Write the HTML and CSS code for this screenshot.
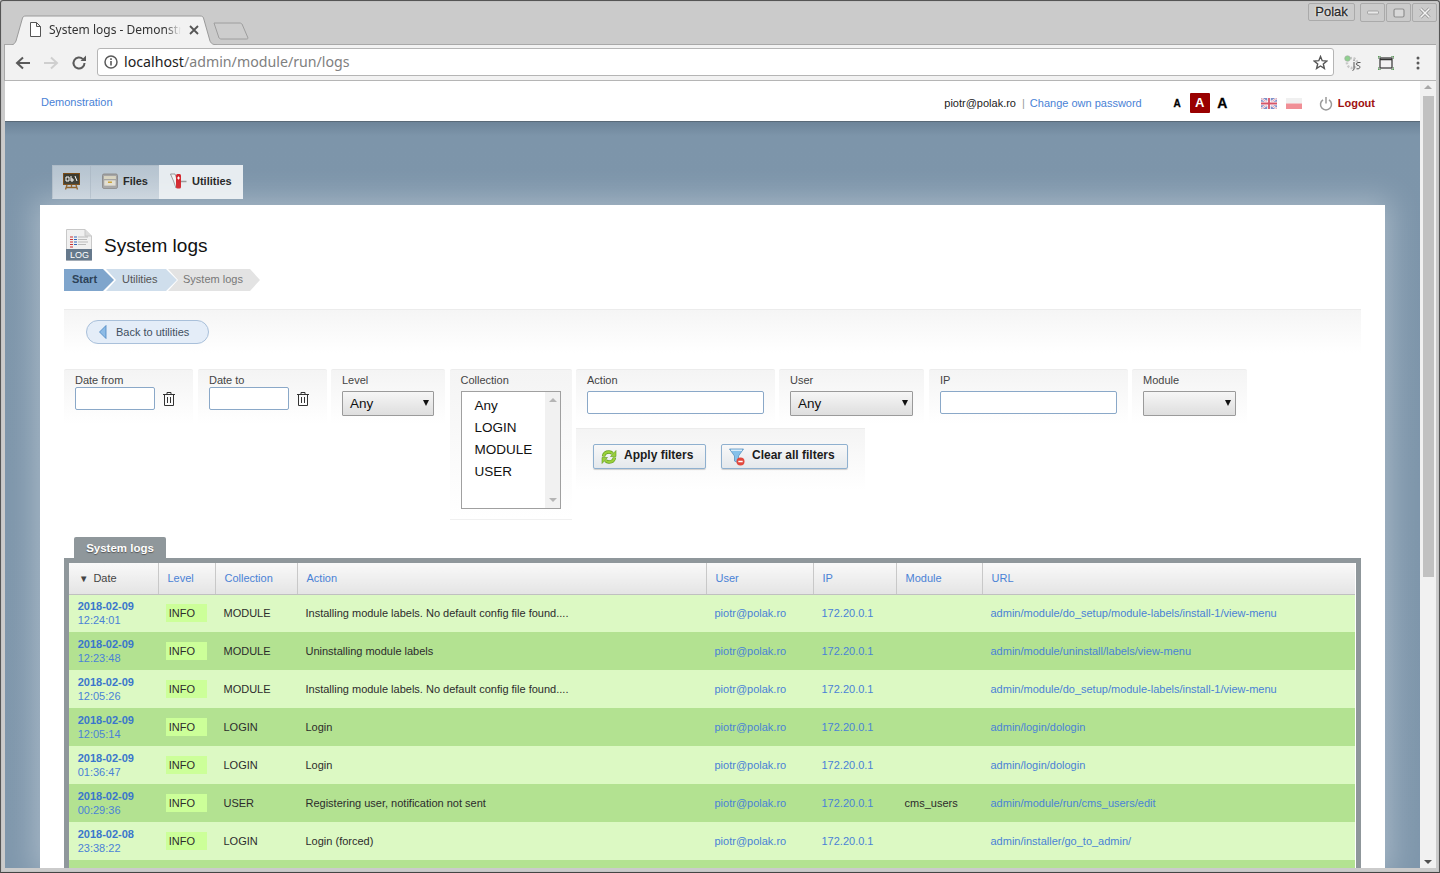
FILE: index.html
```html
<!DOCTYPE html>
<html lang="en">
<head>
<meta charset="utf-8">
<title>System logs - Demonstration</title>
<link rel="stylesheet" href="styles.css">
</head>
<body>
<div class="window">
  <div class="titlebar">
    <div class="tab">
      <svg class="tab-shape" width="206" height="30" viewBox="0 0 206 30"><path d="M0.500 30C3 29.500 4 28 5 26L11.500 3C12 1.500 13 1 15 1H189C191 1 192 1.500 192.500 3L199 26C200 28 201 29.500 205.500 30" fill="#f2f2f2" stroke="#9a9a9a"/></svg>
      <svg class="tab-file" width="11" height="15" viewBox="0 0 11 15"><path d="M.5 .5H6.500L10.500 4.500V14.500H.5zM6.500 .5V4.500H10.500" fill="#fff" stroke="#555"/></svg>
      <span class="tab-title">System logs - Demonstration</span>
      <svg class="tab-x" width="10" height="10" viewBox="0 0 10 10"><path d="M1 1L9 9M9 1L1 9" stroke="#555" stroke-width="1.800"/></svg>
    </div>
    <svg class="newtab" width="36" height="18" viewBox="0 0 36 18"><path d="M1 1H27C28 1 29 2 29 2L35 16C35 17 34 17 33 17H8C7 17 6 16 6 16z" fill="#cdcdcd" stroke="#9e9e9e"/></svg>
    <div class="title-spacer"></div>
    <div class="wm-user">Polak</div>
    <div class="wm-btn"><svg width="12" height="6" viewBox="0 0 12 6"><rect x=".5" y="1" width="11" height="3" rx="1" fill="#e8e8e8" stroke="#999" stroke-width=".8"/></svg></div>
    <div class="wm-btn"><svg width="12" height="10" viewBox="0 0 12 10"><rect x="1" y="1" width="10" height="8" rx="1.500" fill="#d8d8d8" stroke="#8f8f8f" stroke-width="1.200"/></svg></div>
    <div class="wm-btn"><svg width="12" height="12" viewBox="0 0 12 12"><path d="M1.500 1.500L10.500 10.500M10.500 1.500L1.500 10.500" stroke="#8c8c8c" stroke-width="3"/><path d="M1.500 1.500L10.500 10.500M10.500 1.500L1.500 10.500" stroke="#f4f4f4" stroke-width="1.600"/></svg></div>
  </div>
  <div class="toolbar">
    <svg class="tool" width="16" height="14" viewBox="0 0 16 14"><path d="M15 7H2.500M8 1.500L2 7L8 12.500" fill="none" stroke="#5a5a5a" stroke-width="2"/></svg>
    <svg class="tool" width="16" height="14" viewBox="0 0 16 14"><path d="M1 7H13.500M8 1.500L14 7L8 12.500" fill="none" stroke="#cfcfcf" stroke-width="2"/></svg>
    <svg class="tool" width="16" height="16" viewBox="0 0 16 16"><path d="M13.500 8A5.500 5.500 0 1 1 11.900 4.100" fill="none" stroke="#5a5a5a" stroke-width="2"/><path d="M9.500 6H15V.5z" fill="#5a5a5a"/></svg>
    <div class="omnibox">
      <svg class="omni-i" width="14" height="14" viewBox="0 0 14 14"><circle cx="7" cy="7" r="6" fill="none" stroke="#5a5a5a" stroke-width="1.500"/><path d="M7 6V10.500M7 3.300V4.900" stroke="#5a5a5a" stroke-width="1.600"/></svg>
      <span class="url"><span class="url-host">localhost</span>/admin/module/run/logs</span>
      <svg class="omni-star" width="15" height="15" viewBox="0 0 15 15"><path d="M7.500 1.500L9.200 5.700L13.800 6L10.300 8.900L11.400 13.400L7.500 11L3.600 13.400L4.700 8.900L1.200 6L5.800 5.700z" fill="none" stroke="#555" stroke-width="1.400"/></svg>
    </div>
    <svg class="ext-js" width="18" height="16" viewBox="0 0 18 16"><circle cx="8" cy="8" r="5" fill="none" stroke="#c8c8c8" stroke-width="2.500" stroke-dasharray="2 1.500"/><circle cx="3.500" cy="3.500" r="2.800" fill="#8fd08f" stroke="#aaa" stroke-width=".6"/><path d="M10 7V14.500L8.500 15.500M10 4.800V5.800M16.500 7.500H14C12 7.500 12 10.500 14 10.500C16.500 10.500 16.500 13.800 14 13.800H12.500" fill="none" stroke="#555" stroke-width="1"/></svg>
    <svg class="ext-frame" width="16" height="14" viewBox="0 0 16 14"><rect x="2" y="2" width="12" height="10" fill="none" stroke="#333" stroke-width="1.200"/><path d="M2 3.500H14" stroke="#333" stroke-width="1.500"/><path d="M0 3V0H3M13 0H16V3M16 11V14H13M3 14H0V11" fill="none" stroke="#2a7a2a"/></svg>
    <svg class="ext-menu" width="4" height="14" viewBox="0 0 4 14"><circle cx="2" cy="2" r="1.500" fill="#5a5a5a"/><circle cx="2" cy="7" r="1.500" fill="#5a5a5a"/><circle cx="2" cy="12" r="1.500" fill="#5a5a5a"/></svg>
  </div>
  <div class="viewport">
    <div class="page">
      <header class="topbar">
        <a class="site-link">Demonstration</a>
        <div class="top-spacer"></div>
        <span class="user-mail">piotr@polak.ro</span>
        <span class="top-sep">|</span>
        <a class="pass-link">Change own password</a>
        <div class="font-switch">
          <span class="font-a font-small">A</span>
          <span class="font-a font-current">A</span>
          <span class="font-a font-large">A</span>
        </div>
        <div class="flags">
          <svg width="16" height="11" viewBox="0 0 16 11"><rect width="16" height="11" fill="#7f90c8"/><path d="M0 0L16 11M16 0L0 11" stroke="#fff" stroke-width="2"/><path d="M0 0L16 11M16 0L0 11" stroke="#d9788c" stroke-width=".7"/><path d="M8 0V11M0 5.500H16" stroke="#fff" stroke-width="3.500"/><path d="M8 0V11M0 5.500H16" stroke="#d5566a" stroke-width="1.800"/></svg>
          <svg width="16" height="11" viewBox="0 0 16 11"><rect width="16" height="5.500" fill="#f0f0f0"/><rect y="5.500" width="16" height="5.500" fill="#f08f96"/></svg>
        </div>
        <svg class="power" width="14" height="15" viewBox="0 0 14 15"><path d="M4 3.800A5.500 5.500 0 1 0 10 3.800" fill="none" stroke="#999" stroke-width="1.500"/><path d="M7 1V7.500" stroke="#999" stroke-width="1.500"/></svg>
        <a class="logout">Logout</a>
      </header>
      <div class="stage">
        <nav class="mainnav">
          <div class="navitem">
            <svg width="17" height="17" viewBox="0 0 17 17"><path d="M4 12L2.500 16.500M13 12L14.500 16.500M8.500 12V15M3 14.500H14" stroke="#8a5a20" stroke-width="1.300"/><rect x="0.500" y="0.500" width="16" height="11" fill="#3a3a30" stroke="#7a4a15"/><path d="M3 4H6V8H3zM8 3V8H10V6H8M12 3L14 8" fill="none" stroke="#fff"/></svg>
          </div>
          <div class="navitem">
            <svg width="16" height="16" viewBox="0 0 16 16"><rect x="0.500" y="1" width="15" height="14.500" rx="1.500" fill="#a5a5a5" stroke="#8a8a8a"/><rect x="2" y="3" width="12" height="3" fill="#d8d4c0"/><rect x="2" y="7" width="12" height="6" fill="#e2dfd2" stroke="#999" stroke-width=".5"/><rect x="6" y="8.500" width="4" height="1.500" fill="#c9a030"/></svg>
            <span>Files</span>
          </div>
          <div class="navitem navitem-active">
            <svg width="17" height="16" viewBox="0 0 17 16"><path d="M.5 1H5L8 9L6 15L3.500 8z" fill="#f2f2f2" stroke="#777" stroke-width=".7"/><rect x="6" y="1" width="5" height="14.500" rx="1.500" fill="#d2232a"/><path d="M8.500 3.500V6.500M7 5H10" stroke="#fff"/><path d="M11 8.500H16.500" stroke="#999" stroke-width="1.500"/></svg>
            <span>Utilities</span>
          </div>
        </nav>
        <main class="card">
          <div class="heading">
            <svg class="heading-icon" width="28" height="32" viewBox="0 0 28 32"><path d="M1.500 .5H20L26.500 7V31H1.500z" fill="#f0f0f0" stroke="#c8c8c8"/><path d="M20 .5V7H26.500" fill="#dcdcdc" stroke="#c8c8c8"/><rect x="1" y="20" width="26" height="11.500" fill="#66798c"/><path d="M5 8H8M5 10.500H8M5 13H8M5 15.500H8M5 18H8" stroke="#c33" stroke-width="1"/><path d="M9 8H12M9 10.500H12M9 13H12M9 15.500H12" stroke="#36b" stroke-width="1"/><path d="M13 8H23M13 10.500H22M13 13H23M13 15.500H21" stroke="#bbb"/><text class="heading-log" x="14.500" y="29" text-anchor="middle">LOG</text></svg>
            <h1 class="page-title">System logs</h1>
          </div>
          <div class="crumbs">
            <span class="crumb crumb-start">Start</span>
            <span class="crumb crumb-mid">Utilities</span>
            <span class="crumb crumb-last">System logs</span>
          </div>
          <div class="backbar">
            <a class="back-btn">
              <svg width="8" height="14" viewBox="0 0 8 14"><path d="M7 .5V13.500L.5 7z" fill="#8dbbe6" stroke="#4a85c0" stroke-width=".8"/></svg>
              <span>Back to utilities</span>
            </a>
          </div>
          <form class="filters">
            <div class="fbox fbox-date">
              <label>Date from</label>
              <div class="date-row">
                <input class="text-input date-input" type="text">
                <svg class="trash" width="12" height="14" viewBox="0 0 12 14"><path d="M0 2.500H12M4 2.500V.5H8V2.500M1.500 2.500V13.500H10.500V2.500M4.500 5V11M7.500 5V11" fill="none" stroke="#333"/></svg>
              </div>
            </div>
            <div class="fbox fbox-date">
              <label>Date to</label>
              <div class="date-row">
                <input class="text-input date-input" type="text">
                <svg class="trash" width="12" height="14" viewBox="0 0 12 14"><path d="M0 2.500H12M4 2.500V.5H8V2.500M1.500 2.500V13.500H10.500V2.500M4.500 5V11M7.500 5V11" fill="none" stroke="#333"/></svg>
              </div>
            </div>
            <div class="fbox fbox-level">
              <label>Level</label>
              <div class="fake-select sel-level"><span>Any</span></div>
            </div>
            <div class="fbox fbox-coll">
              <label>Collection</label>
              <div class="listbox">
                <div class="list-items"><div>Any</div><div>LOGIN</div><div>MODULE</div><div>USER</div></div>
                <div class="list-scroll"><i class="arrow-up"></i><i class="arrow-down"></i></div>
              </div>
            </div>
            <div class="filters-right">
              <div class="filters-row">
                <div class="fbox fbox-action">
                  <label>Action</label>
                  <input class="text-input wide-input action-input" type="text">
                </div>
                <div class="fbox fbox-user">
                  <label>User</label>
                  <div class="fake-select sel-user"><span>Any</span></div>
                </div>
                <div class="fbox fbox-ip">
                  <label>IP</label>
                  <input class="text-input wide-input" type="text">
                </div>
                <div class="fbox fbox-module">
                  <label>Module</label>
                  <div class="fake-select sel-module"><span></span></div>
                </div>
              </div>
              <div class="fbox-actions">
                <button class="action-btn btn-apply" type="button">
                  <svg width="16" height="16" viewBox="0 0 16 16"><path d="M2.500 7.500C3 4.500 5.500 3 8 3C9.500 3 10.500 3.500 11.500 4.500" fill="none" stroke="#5f9a1c" stroke-width="3.400"/><path d="M2.500 7.500C3 4.500 5.500 3 8 3C9.500 3 10.500 3.500 11.500 4.500" fill="none" stroke="#9ad13a" stroke-width="2.200"/><path d="M9.500 7.500H15V1.500z" fill="#9ad13a" stroke="#5f9a1c" stroke-width=".6"/><path d="M13.500 8.500C13 11.500 10.500 13 8 13C6.500 13 5.500 12.500 4.500 11.500" fill="none" stroke="#5f9a1c" stroke-width="3.400"/><path d="M13.500 8.500C13 11.500 10.500 13 8 13C6.500 13 5.500 12.500 4.500 11.500" fill="none" stroke="#9ad13a" stroke-width="2.200"/><path d="M6.500 8.500H1V14.500z" fill="#9ad13a" stroke="#5f9a1c" stroke-width=".6"/></svg>
                  <span>Apply filters</span>
                </button>
                <button class="action-btn btn-clear" type="button">
                  <svg width="17" height="18" viewBox="0 0 17 18"><path d="M.5 1H14.500L9.500 8V15L5.500 13V8z" fill="#86c1ea" stroke="#5a93c0" stroke-width=".8"/><path d="M2 2.200H13" stroke="#fff"/><circle cx="11.500" cy="13.500" r="4" fill="#e2483d"/><path d="M9.300 13.500H13.700" stroke="#fff" stroke-width="1.500"/></svg>
                  <span>Clear all filters</span>
                </button>
              </div>
            </div>
          </form>
          <div class="grid-tab">System logs</div>
          <div class="grid-frame">
            <table class="grid">
              <colgroup><col class="c-date"><col class="c-level"><col class="c-coll"><col class="c-action"><col class="c-user"><col class="c-ip"><col class="c-mod"><col class="c-url"></colgroup>
              <thead>
                <tr><th class="th-date"><span class="sort">▼</span>Date</th><th>Level</th><th>Collection</th><th>Action</th><th>User</th><th>IP</th><th>Module</th><th>URL</th></tr>
              </thead>
              <tbody>
                <tr><td class="td-date"><b>2018-02-09</b><br>12:24:01</td><td><span class="level">INFO</span></td><td>MODULE</td><td>Installing module labels. No default config file found....</td><td class="lnk">piotr@polak.ro</td><td class="lnk">172.20.0.1</td><td></td><td class="lnk">admin/module/do_setup/module-labels/install-1/view-menu</td></tr>
                <tr><td class="td-date"><b>2018-02-09</b><br>12:23:48</td><td><span class="level">INFO</span></td><td>MODULE</td><td>Uninstalling module labels</td><td class="lnk">piotr@polak.ro</td><td class="lnk">172.20.0.1</td><td></td><td class="lnk">admin/module/uninstall/labels/view-menu</td></tr>
                <tr><td class="td-date"><b>2018-02-09</b><br>12:05:26</td><td><span class="level">INFO</span></td><td>MODULE</td><td>Installing module labels. No default config file found....</td><td class="lnk">piotr@polak.ro</td><td class="lnk">172.20.0.1</td><td></td><td class="lnk">admin/module/do_setup/module-labels/install-1/view-menu</td></tr>
                <tr><td class="td-date"><b>2018-02-09</b><br>12:05:14</td><td><span class="level">INFO</span></td><td>LOGIN</td><td>Login</td><td class="lnk">piotr@polak.ro</td><td class="lnk">172.20.0.1</td><td></td><td class="lnk">admin/login/dologin</td></tr>
                <tr><td class="td-date"><b>2018-02-09</b><br>01:36:47</td><td><span class="level">INFO</span></td><td>LOGIN</td><td>Login</td><td class="lnk">piotr@polak.ro</td><td class="lnk">172.20.0.1</td><td></td><td class="lnk">admin/login/dologin</td></tr>
                <tr><td class="td-date"><b>2018-02-09</b><br>00:29:36</td><td><span class="level">INFO</span></td><td>USER</td><td>Registering user, notification not sent</td><td class="lnk">piotr@polak.ro</td><td class="lnk">172.20.0.1</td><td>cms_users</td><td class="lnk">admin/module/run/cms_users/edit</td></tr>
                <tr><td class="td-date"><b>2018-02-08</b><br>23:38:22</td><td><span class="level">INFO</span></td><td>LOGIN</td><td>Login (forced)</td><td class="lnk">piotr@polak.ro</td><td class="lnk">172.20.0.1</td><td></td><td class="lnk">admin/installer/go_to_admin/</td></tr>
                <tr class="row-cut"><td></td><td></td><td></td><td></td><td></td><td></td><td></td><td></td></tr>
              </tbody>
            </table>
          </div>
        </main>
      </div>
    </div>
    <div class="scrollbar">
      <i class="sb-up"></i>
      <div class="sb-thumb"></div>
      <div class="sb-fill"></div>
      <i class="sb-down"></i>
    </div>
  </div>
</div>
</body>
</html>
```
FILE: styles.css
```css
html, body { margin: 0; padding: 0; height: 873px; overflow: hidden; }
body { font-family: "Liberation Sans", Arial, sans-serif; font-size: 11px; color: #222; background: #cbcbcb; }

.window { height: 873px; box-sizing: border-box; display: flex; flex-direction: column; background: #cbcbcb; border: 1px solid #555; border-bottom: 1px solid #444; border-right: 1px solid #555; border-radius: 3px 3px 0 0; padding: 0 3px 4px 3px; box-shadow: inset 0 0 0 1px #c4c4c4; }

/* browser chrome */
.titlebar { height: 43px; display: flex; align-items: flex-start; flex: none; margin: 0 -2px 0 -1px; }
.tab { position: relative; width: 205px; height: 29px; margin: 14px 0 0 8px; display: flex; align-items: center; flex: none; }
.tab-shape { position: absolute; left: 0; top: 0; }
.tab-file { position: relative; margin-left: 19px; flex: none; }
.tab-title { position: relative; margin-left: 8px; width: 132px; overflow: hidden; white-space: nowrap; font-family: "Noto Sans", sans-serif; font-size: 12px; color: #333; -webkit-mask-image: linear-gradient(90deg, #000 88%, transparent); mask-image: linear-gradient(90deg, #000 88%, transparent); }
.tab-x { position: relative; margin-left: 8px; flex: none; }
.newtab { margin: 21px 0 0 -3px; flex: none; }
.title-spacer { flex: 1; }
.wm-user { width: 45px; height: 16px; margin-top: 2px; margin-right: 5px; border: 1px solid #aaa; border-radius: 2px; box-sizing: content-box; text-align: center; font-size: 13px; line-height: 16px; color: #2a2a2a; -webkit-text-stroke: .3px #2a2a2a; text-shadow: 0 0 2px #fff, 0 0 2px #fff; }
.wm-btn { width: 23px; height: 17px; margin-top: 2px; margin-right: 1px; border: 1px solid #aaa; border-radius: 2px; display: flex; align-items: center; justify-content: center; }
.toolbar { height: 37px; box-sizing: border-box; flex: none; display: flex; align-items: center; background: #f2f2f2; border-top: 1px solid #a8a8a8; border-left: 1px solid #a8a8a8; border-bottom: 1px solid #b5b5b5; padding: 0 16px 0 10px; margin-left: 0; }
.tool { margin-right: 12px; flex: none; }
.omnibox { flex: 1; height: 28px; margin-left: -2px; box-sizing: border-box; background: #fff; border: 1px solid #b5b5b5; border-radius: 3px; display: flex; align-items: center; padding: 0 5px 0 6px; margin-top: -1px; }
.omni-i { flex: none; }
.url { margin: -1px 0 0 6px; flex: 1; font-family: "Noto Sans", sans-serif; font-size: 14.200px; color: #808080; white-space: nowrap; }
.url-host { color: #222; }
.omni-star { flex: none; }
.ext-js { margin-left: 10px; flex: none; }
.ext-frame { margin-left: 16px; flex: none; }
.ext-menu { margin-left: 22px; flex: none; }

/* page */
.viewport { flex: 1; min-height: 0; display: flex; overflow: hidden; margin-left: 1px; }
.page { flex: 1; min-width: 0; display: flex; flex-direction: column; overflow: hidden; }
.topbar { height: 41px; box-sizing: border-box; flex: none; display: flex; align-items: center; background: #fff; border-bottom: 1px solid #5a6a78; padding: 2px 45px 0 36px; }
.site-link { color: #4a82d6; }
.top-spacer { flex: 1; }
.user-mail { color: #222; margin-top: 1px; }
.top-sep { color: #999; margin: 1px 5px 0 6px; }
.pass-link { color: #4a82d6; margin-top: 1px; }
.font-switch { display: flex; align-items: center; margin-left: 31px; margin-top: 2px; }
.font-a { font-weight: bold; color: #000; text-align: center; }
.font-small { font-size: 10px; width: 9px; -webkit-text-stroke: .3px #000; }
.font-current { width: 20px; height: 20px; margin: 0 7px 0 8px; background: #990000; color: #fff; font-size: 13px; line-height: 20px; border-radius: 1px; }
.font-large { font-size: 14px; width: 11px; -webkit-text-stroke: .3px #000; }
.flags { display: flex; gap: 9px; margin-left: 33px; margin-top: 3px; }
.power { margin-left: 17px; margin-top: 3px; flex: none; }
.logout { margin-left: 5px; color: #a01010; font-weight: bold; margin-top: 1px; }

.stage { flex: 1; min-height: 0; background: linear-gradient(180deg, #6d8499 0, #7d95aa 14px, #7f97ac 100%); padding: 43px 35px 0 35px; display: flex; flex-direction: column; }
.mainnav { display: flex; height: 34px; margin-left: 12px; flex: none; }
.navitem { display: flex; align-items: center; gap: 5px; padding: 0 11px 2px 11px; background: linear-gradient(180deg, #b6c4d0, #c4cfd9); border: 1px solid #aebbc7; border-bottom-color: #c5d0da; box-sizing: border-box; font-weight: bold; color: #222; margin-right: -1px; }
.navitem:first-child { width: 39px; padding: 0 10px 2px 10px; }
.navitem:nth-child(2) { width: 70px; }
.navitem-active { background: #e7ecf0; border-color: #e7ecf0; width: 84px; padding: 0 10px 2px 10px; }
.card { flex: 1; min-height: 0; margin-top: 6px; background: #fff; box-shadow: 0 0 28px 6px rgba(255,255,255,.32); padding: 23px 24px 0 24px; overflow: hidden; }

.heading { display: flex; align-items: center; height: 33px; }
.heading-icon { margin-left: 1px; flex: none; }
.heading-log { font-family: "Liberation Sans", sans-serif; font-size: 9px; fill: #fff; }
.page-title { margin: 2px 0 0 11px; font-size: 19px; font-weight: normal; color: #111; }
.crumbs { display: flex; height: 22px; margin-top: 8px; }
.crumb { display: flex; align-items: center; box-sizing: border-box; height: 22px; padding-bottom: 3px; }
.crumb-start { width: 50px; padding-left: 8px; background: #7fa5cc; color: #2d4258; font-weight: bold; clip-path: polygon(0 0, calc(100% - 11px) 0, 100% 50%, calc(100% - 11px) 100%, 0 100%); }
.crumb-mid { width: 71px; margin-left: -8px; padding-left: 16px; background: #cfdeec; color: #555; clip-path: polygon(0 0, calc(100% - 11px) 0, 100% 50%, calc(100% - 11px) 100%, 0 100%, 10px 50%); }
.crumb-last { width: 92px; margin-left: -9px; padding-left: 15px; background: #e3e3e3; color: #777; clip-path: polygon(0 0, calc(100% - 10px) 0, 100% 50%, calc(100% - 10px) 100%, 0 100%, 10px 50%); }
.backbar { height: 44px; margin-top: 18px; box-sizing: border-box; border-top: 1px solid #ececec; background: linear-gradient(180deg, #f5f5f5, #fff); padding: 10px 0 0 22px; }
.back-btn { display: flex; align-items: center; width: 123px; height: 24px; box-sizing: border-box; border: 1px solid #a9c0da; border-radius: 12px; background: #e4edf8; padding-left: 12px; color: #3f4f5f; }
.back-btn span { margin-left: 9px; }

.filters { display: flex; gap: 4px; margin-top: 16px; height: 168px; align-items: flex-start; }
.fbox { box-sizing: border-box; background: linear-gradient(180deg, #f4f4f4, #fff); border-top: 1px solid #ececec; border-radius: 2px 2px 0 0; padding: 4px 11px 0 11px; height: 55px; flex: none; }
.fbox label { display: block; line-height: 13px; color: #444; }
.fbox-date { width: 129px; }
.fbox-date + .fbox-date { margin-left: 1px; width: 129px; }
.fbox-level { width: 114px; }
.fbox-coll { width: 122px; margin-left: 1px; height: 151px; border-bottom: 1px solid #f0f0f0; }
.fbox-coll label { margin-left: -.5px; }
.filters-right { flex: none; display: flex; flex-direction: column; gap: 4px; }
.filters-row { display: flex; gap: 4px; }
.date-row { display: flex; align-items: center; margin-top: 0; }
.text-input { box-sizing: border-box; height: 23px; border: 1px solid #8aa8c8; border-radius: 2px; background: #fff; padding: 0; margin: 0; display: block; }
.date-input { width: 80px; }
.trash { margin-left: 8px; flex: none; }
.wide-input { margin-top: 4px; }
.fbox-action { width: 199px; }
.action-input { width: 177px; }
.fbox-user { width: 145px; }
.fbox-ip { width: 199px; margin-left: 1px; }
.fbox-ip .text-input { width: 177px; }
.fbox-module { width: 115px; }
.fake-select { position: relative; box-sizing: border-box; height: 25px; margin-top: 4px; border: 1px solid #9a9a9a; border-radius: 1px; background: linear-gradient(180deg, #f6f6f6, #dedede); padding-left: 7px; font-size: 13.500px; line-height: 23px; color: #111; }
.fake-select::after { content: ""; position: absolute; right: 4px; top: 8px; border-left: 3.500px solid transparent; border-right: 3.500px solid transparent; border-top: 6px solid #111; }
.sel-level { width: 92px; }
.sel-user { width: 123px; }
.sel-module { width: 93px; }
.listbox { display: flex; box-sizing: border-box; width: 100px; height: 118px; margin-top: 4px; border: 1px solid #a0a0a0; background: #fff; }
.list-items { flex: 1; padding: 3px 0 0 12.500px; font-size: 13.500px; line-height: 22px; color: #111; }
.list-scroll { width: 15px; background: #f1f1f1; display: flex; flex-direction: column; justify-content: space-between; align-items: center; padding: 6px 0; box-sizing: border-box; }
.arrow-up { border-left: 4px solid transparent; border-right: 4px solid transparent; border-bottom: 4px solid #b5b5b5; }
.arrow-down { border-left: 4px solid transparent; border-right: 4px solid transparent; border-top: 4px solid #b5b5b5; }
.fbox-actions { box-sizing: border-box; width: 289px; height: 62px; display: flex; gap: 15px; background: linear-gradient(180deg, #f4f4f4, #fff); border-top: 1px solid #ececec; padding: 15px 0 0 17px; }
.action-btn { display: flex; align-items: center; height: 25px; box-sizing: border-box; border: 1px solid #8fb0cf; border-radius: 2px; background: linear-gradient(180deg, #f8f8f8, #e4e8ec); box-shadow: 0 1px 1px rgba(0,0,0,.18); font-family: "Liberation Sans", sans-serif; font-size: 12px; font-weight: bold; color: #1c1c1c; padding: 0 0 4px 7px; gap: 7px; margin: 0; }
.action-btn svg { margin-bottom: -4px; flex: none; }
.btn-apply { width: 113px; }
.btn-clear { width: 127px; gap: 6px; }

/* grid */
.grid-tab { width: 92px; height: 21px; margin: 0 0 0 10px; box-sizing: border-box; background: #8f979b; border-radius: 2px 2px 0 0; color: #fff; font-weight: bold; font-size: 11.500px; line-height: 22px; text-align: center; text-shadow: 0 1px 1px #555; }
.grid-frame { box-sizing: border-box; border: 5px solid #8f979b; border-bottom: 0; margin-right: 0; }
.grid { table-layout: fixed; border-collapse: collapse; width: 1286px; }
.c-date { width: 89px; } .c-level { width: 57px; } .c-coll { width: 82px; } .c-action { width: 409px; } .c-user { width: 107px; } .c-ip { width: 83px; } .c-mod { width: 86px; } .c-url { width: 373px; }
.grid th { height: 31px; box-sizing: border-box; padding: 0 0 0 9px; background: linear-gradient(180deg, #f9f9f9, #e4e4e4); border-left: 1px solid #fff; border-right: 1px solid #c8c8c8; border-bottom: 1px solid #c0c0c0; text-align: left; font-weight: normal; color: #4a82d6; }
.grid th:last-child { border-right: 0; }
.grid th:first-child { border-left: 0; }
.grid .th-date { color: #444; padding-left: 10px; }
.sort { font-size: 9.500px; margin-right: 5px; color: #444; }
.grid td { height: 38px; box-sizing: border-box; padding: 0 0 0 8.500px; color: #2c2c2c; white-space: nowrap; overflow: hidden; }
.grid tbody tr:nth-child(odd) { background: #dcf9c3; }
.grid tbody tr:nth-child(even) { background: #b3e291; }
.grid .td-date { color: #4a82d6; line-height: 14px; padding-left: 8.700px; }
.td-date b { color: #3a76cc; }
.level { display: block; width: 41px; height: 18px; box-sizing: border-box; margin-left: -.5px; padding-left: 2.700px; line-height: 18px; background: #ccff99; }
.grid .lnk { color: #4a82d6; }
.row-cut td { height: 38px; }

/* scrollbar */
.scrollbar { width: 16px; flex: none; background: #f1f1f1; display: flex; flex-direction: column; align-items: center; padding: 4px 0; box-sizing: border-box; }
.sb-up { flex: none; border-left: 4px solid transparent; border-right: 4px solid transparent; border-bottom: 4px solid #a8a8a8; margin-bottom: 7px; }
.sb-thumb { flex: none; width: 11px; height: 481px; background: #c1c1c1; }
.sb-fill { flex: 1; }
.sb-down { flex: none; border-left: 4px solid transparent; border-right: 4px solid transparent; border-top: 4px solid #505050; }
```
